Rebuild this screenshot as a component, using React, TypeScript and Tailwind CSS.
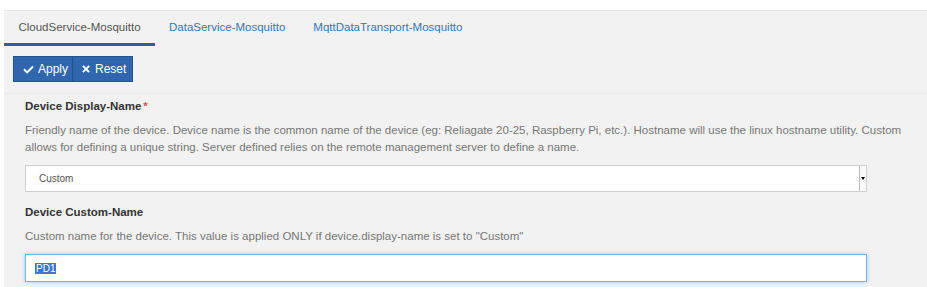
import { useState } from 'react';

const tabs = ['CloudService-Mosquitto', 'DataService-Mosquitto', 'MqttDataTransport-Mosquitto'];

function CheckIcon() {
  return (
    <svg viewBox="0 0 16 16" className="w-[11px] h-[11px]" fill="currentColor">
      <path d="M13.6 2.6 6 10.2 2.4 6.6 0.4 8.6 6 14.2 15.6 4.6z" />
    </svg>
  );
}

function TimesIcon() {
  return (
    <svg viewBox="0 0 16 16" className="w-[8px] h-[8px]" fill="none" stroke="currentColor" strokeWidth="3.6" strokeLinecap="square">
      <path d="M3 3 13 13M13 3 3 13" />
    </svg>
  );
}

export default function App() {
  const [active, setActive] = useState(0);

  return (
    <div className="min-h-screen bg-white pt-[10px] pl-[4px] font-[family-name:'Liberation_Sans',Arial,sans-serif]">
      <div className="h-[277px] bg-[#f2f2f2] border-t border-[#e6e6e6] overflow-hidden">
        {/* Tabs */}
        <div className="flex h-[35px]">
          {tabs.map((t, i) => (
            <button
              key={t}
              onClick={() => setActive(i)}
              className={`px-[14px] text-[11.5px] leading-none cursor-pointer ${
                i === active ? 'w-[151px] text-[#555] border-b-[3px] border-[#2f5f9f] pt-[1px]' : 'text-[#3279bb] pb-[2px]'
              }`}
            >
              {t}
            </button>
          ))}
        </div>

        {/* Toolbar */}
        <div className="flex pl-[9px] mt-[10px]">
          <button className="flex items-center gap-[4px] h-[26px] w-[60px] pl-[9px] bg-[#2f66ad] border border-[#22538f] text-white text-[12px]">
            <CheckIcon />
            Apply
          </button>
          <button className="flex items-center gap-[5px] h-[26px] w-[60px] pl-[9px] bg-[#2f66ad] border border-l-0 border-[#22538f] text-white text-[12px]">
            <TimesIcon />
            Reset
          </button>
        </div>

        {/* Form */}
        <div className="mt-[11px] border-t border-[#ebebeb] pt-[4px] pl-[21px]">
          <div className="text-[11.5px] leading-[17px] font-bold text-[#333] mb-[7px]">
            Device Display-Name<span className="text-[#d9534f] ml-[2px]">*</span>
          </div>
          <p className="text-[11.5px] leading-[17px] text-[#777] mb-[9px]">
            Friendly name of the device. Device name is the common name of the device (eg: Reliagate 20-25, Raspberry Pi, etc.). Hostname will use the linux hostname utility. Custom allows for defining a unique string. Server defined relies on the remote management server to define a name.
          </p>
          <div className="flex h-[27px] w-[842px] bg-white border border-[#cfcfcf]">
            <div className="flex-1 flex items-center pl-[13px] text-[10px] text-[#555]">Custom</div>
            <div className="w-[7px] border-l border-[#bdbdbd] bg-[#fafafa] flex items-center justify-center">
              <span className="w-0 h-0 border-l-[2.5px] border-r-[2.5px] border-t-[3px] border-l-transparent border-r-transparent border-t-black" />
            </div>
          </div>

          <div className="mt-[12px] text-[11.5px] leading-[17px] font-bold text-[#333] mb-[7px]">Device Custom-Name</div>
          <p className="text-[11.5px] leading-[17px] text-[#777] mb-[9px]">
            Custom name for the device. This value is applied ONLY if device.display-name is set to "Custom"
          </p>
          <div className="flex items-center h-[28px] w-[842px] bg-white border border-[#78b3e6] shadow-[0_0_4px_rgba(102,175,233,0.6)] pl-[9px]">
            <span className="bg-[#3a77d6] text-white text-[10px] leading-[11px] px-[1px]">PD1</span>
          </div>
        </div>
      </div>
    </div>
  );
}
